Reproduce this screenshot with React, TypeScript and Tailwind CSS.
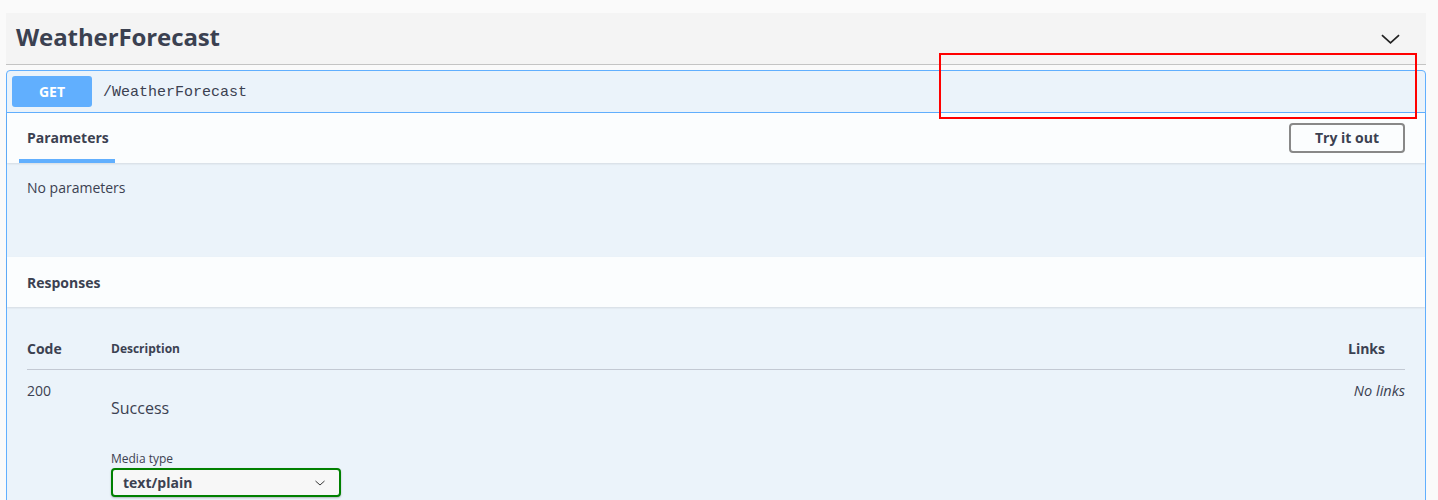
import React from 'react';

const sans = { fontFamily: '"Open Sans", "Noto Sans", sans-serif' };

function Chevron({ className }: { className?: string }) {
    return (
        <svg viewBox="0 0 20 10" className={className} fill="none" stroke="currentColor" strokeWidth="1.8">
            <polyline points="1,1 10,9 19,1" />
        </svg>
    );
}

export default function App() {
    return (
        <div className="relative h-[500px] overflow-hidden bg-[#fafafa] pl-[6px] pt-[13px] text-[#3b4151]" style={sans}>
            <div className="w-[1420px]">
                {/* tag header */}
                <div className="flex h-[52px] items-center justify-between border-b border-[#c4c4c4] bg-[#f4f4f4] pl-[10px] pr-[26px]">
                    <h3 className="mb-[3px] text-[24px] font-bold tracking-[-0.1px]">WeatherForecast</h3>
                    <Chevron className="mt-[1px] h-[10px] w-[19px] text-[#222]" />
                </div>

                {/* operation block */}
                <div className="mt-[5px] rounded-[4px] border border-[#61affe] bg-[#ebf3fa]">
                    <div className="flex h-[42px] items-center border-b border-[#61affe] px-[5px]">
                        <span className="flex h-[31px] w-[80px] items-center justify-center rounded-[3px] bg-[#61affe] text-[14px] font-bold text-white">
                            GET
                        </span>
                        <span className="ml-[11px] mt-[4px] text-[15px] text-[#3b4151]" style={{ fontFamily: '"Liberation Mono", monospace' }}>
                            /WeatherForecast
                        </span>
                    </div>

                    {/* parameters header */}
                    <div className="flex h-[50px] items-center justify-between bg-white/80 pr-[20px] shadow-[0_1px_2px_rgba(0,0,0,0.1)]">
                        <div className="ml-[12px] flex h-full w-[96px] flex-col justify-end">
                            <span className="pl-[8px] text-[14px] font-bold">Parameters</span>
                            <div className="mt-[11px] h-[4px] bg-[#61affe]" />
                        </div>
                        <button className="h-[30px] w-[116px] rounded-[4px] border-2 border-[#888] bg-transparent pb-[2px] text-[14px] font-bold text-[#3b4151]">
                            Try it out
                        </button>
                    </div>
                    <div className="h-[94px] px-[20px] pt-[14px] text-[14px]">No parameters</div>

                    {/* responses header */}
                    <div className="flex h-[50px] items-center bg-white/80 px-[20px] shadow-[0_1px_2px_rgba(0,0,0,0.1)]">
                        <span className="text-[14px] font-bold">Responses</span>
                    </div>

                    <div className="px-[20px] pb-[40px] pt-[20px]">
                        <div className="flex h-[43px] items-center border-b border-[#c3c9d3] pt-[1px]">
                            <span className="w-[84px] text-[14px] font-bold">Code</span>
                            <span className="flex-1 text-[12px] font-bold">Description</span>
                            <span className="pr-[20px] text-[14px] font-bold">Links</span>
                        </div>
                        <div className="flex pt-[10px]">
                            <span className="w-[84px] text-[14px]">200</span>
                            <div className="flex-1">
                                <div className="pt-[16px] text-[16px]">Success</div>
                                <div className="mt-[31px] text-[12px] leading-[16px]">Media type</div>
                                <div className="mt-[1px] flex h-[29px] w-[230px] items-center justify-between rounded-[4px] border-2 border-[#008000] bg-[#f7f7f7] pl-[10px] pr-[14px] shadow-[0_1px_2px_rgba(0,0,0,0.25)]">
                                    <span className="text-[14px] font-bold">text/plain</span>
                                    <Chevron className="h-[6px] w-[10px] text-[#222]" />
                                </div>
                            </div>
                            <span className="text-[14.5px] italic">No links</span>
                        </div>
                    </div>
                </div>
            </div>

            {/* annotation */}
            <div className="pointer-events-none absolute left-[939px] top-[53px] h-[66px] w-[478px] border-2 border-[#ff0000]" />
        </div>
    );
}
